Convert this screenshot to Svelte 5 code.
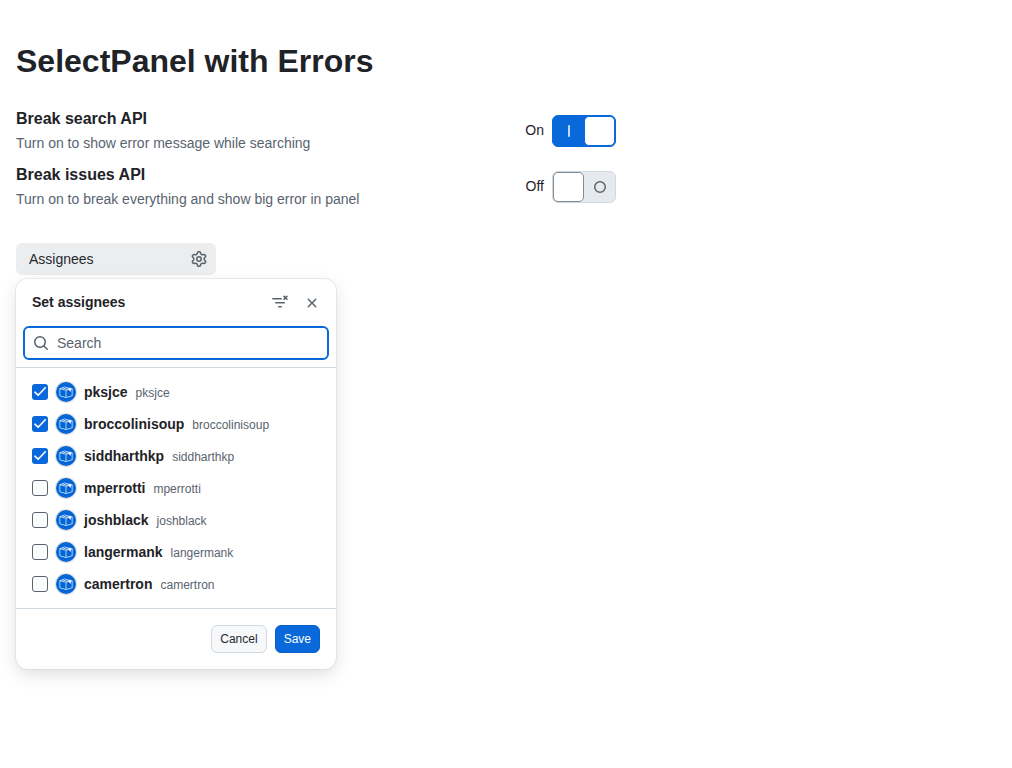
<script>
  let settings = $state([
    { title: 'Break search API', caption: 'Turn on to show error message while searching', on: true },
    { title: 'Break issues API', caption: 'Turn on to break everything and show big error in panel', on: false }
  ]);
  let people = $state([
    { login: 'pksjce', selected: true },
    { login: 'broccolinisoup', selected: true },
    { login: 'siddharthkp', selected: true },
    { login: 'mperrotti', selected: false },
    { login: 'joshblack', selected: false },
    { login: 'langermank', selected: false },
    { login: 'camertron', selected: false }
  ]);
</script>

<main>
  <h1>SelectPanel with Errors</h1>

  <section class="settings">
    {#each settings as s}
      <div class="setting">
        <div class="about">
          <h2>{s.title}</h2>
          <p>{s.caption}</p>
        </div>
        <span class="state">{s.on ? 'On' : 'Off'}</span>
        <button class="switch" class:on={s.on} aria-label={s.title} onclick={() => (s.on = !s.on)}>
          {#if s.on}
            <span class="glyph"><svg width="16" height="16" viewBox="0 0 16 16"><path fill="currentColor" d="M8 2a.75.75 0 0 1 .75.75v10.5a.75.75 0 0 1-1.5 0V2.75A.75.75 0 0 1 8 2Z" /></svg></span>
            <span class="knob"></span>
          {:else}
            <span class="knob"></span>
            <span class="glyph"><svg width="16" height="16" viewBox="0 0 16 16"><circle cx="8" cy="8" r="5.25" fill="none" stroke="currentColor" stroke-width="1.5" /></svg></span>
          {/if}
        </button>
      </div>
    {/each}
  </section>

  <button class="anchor">
    <span>Assignees</span>
    <svg width="16" height="16" viewBox="0 0 16 16" fill="currentColor"><path d="M8 0a8.2 8.2 0 0 1 .701.031C9.444.095 9.99.645 10.16 1.29l.288 1.107c.018.066.079.158.212.224.231.114.454.243.668.386.123.082.233.09.299.071l1.103-.303c.644-.176 1.392.021 1.82.63.27.385.506.792.704 1.218.315.675.111 1.422-.364 1.891l-.814.806c-.049.048-.098.147-.088.294.016.257.016.515 0 .772-.01.147.038.246.088.294l.814.806c.475.469.679 1.216.364 1.891a7.977 7.977 0 0 1-.704 1.217c-.428.61-1.176.807-1.82.63l-1.102-.302c-.067-.019-.177-.011-.3.071a5.909 5.909 0 0 1-.668.386c-.133.066-.194.158-.211.224l-.29 1.106c-.168.646-.715 1.196-1.458 1.26a8.006 8.006 0 0 1-1.402 0c-.743-.064-1.289-.614-1.458-1.26l-.289-1.106c-.018-.066-.079-.158-.212-.224a5.738 5.738 0 0 1-.668-.386c-.123-.082-.233-.09-.299-.071l-1.103.303c-.644.176-1.392-.021-1.82-.63a8.12 8.12 0 0 1-.704-1.218c-.315-.675-.111-1.422.363-1.891l.815-.806c.05-.048.098-.147.088-.294a6.214 6.214 0 0 1 0-.772c.01-.147-.038-.246-.088-.294l-.815-.806C.635 6.045.431 5.298.746 4.623a7.92 7.92 0 0 1 .704-1.217c.428-.61 1.176-.807 1.82-.63l1.102.302c.067.019.177.011.3-.071.214-.143.437-.272.668-.386.133-.066.194-.158.211-.224l.29-1.106C6.009.645 6.556.095 7.299.03 7.53.01 7.764 0 8 0Zm-.571 1.525c-.036.003-.108.036-.137.146l-.289 1.105c-.147.561-.549.967-.998 1.189-.173.086-.34.183-.5.29-.417.278-.97.423-1.529.27l-1.103-.303c-.109-.03-.175.016-.195.045-.22.312-.412.644-.573.99-.014.031-.021.11.059.19l.815.806c.411.406.562.957.53 1.456a4.709 4.709 0 0 0 0 .582c.032.499-.119 1.05-.53 1.456l-.815.806c-.081.08-.073.159-.059.19.162.346.353.677.573.989.02.03.085.076.195.046l1.102-.303c.56-.153 1.113-.008 1.53.27.161.107.328.204.501.29.447.222.85.629.997 1.189l.289 1.105c.029.109.101.143.137.146a6.6 6.6 0 0 0 1.142 0c.036-.003.108-.036.137-.146l.289-1.105c.147-.561.549-.967.998-1.189.173-.086.34-.183.5-.29.417-.278.97-.423 1.529-.27l1.103.303c.109.029.175-.016.195-.045.22-.313.411-.644.573-.99.014-.031.021-.11-.059-.19l-.815-.806c-.411-.406-.562-.957-.53-1.456a4.709 4.709 0 0 0 0-.582c-.032-.499.119-1.05.53-1.456l.815-.806c.081-.08.073-.159.059-.19a6.464 6.464 0 0 0-.573-.989c-.02-.03-.085-.076-.195-.046l-1.102.303c-.56.153-1.113.008-1.53-.27a4.44 4.44 0 0 0-.501-.29c-.447-.222-.85-.629-.997-1.189l-.289-1.105c-.029-.11-.101-.143-.137-.146a6.6 6.6 0 0 0-1.142 0ZM11 8a3 3 0 1 1-6 0 3 3 0 0 1 6 0ZM9.5 8a1.5 1.5 0 1 0-3.001.001A1.5 1.5 0 0 0 9.5 8Z" /></svg>
  </button>

  <div class="panel" role="dialog" aria-label="Set assignees">
    <header>
      <h3>Set assignees</h3>
      <button class="icon" aria-label="Clear selection">
        <svg width="16" height="16" viewBox="0 0 16 16" fill="none" stroke="currentColor" stroke-width="1.6" stroke-linecap="round"><path d="M.8 3.75h8.4M3.8 7.75h8.4M6.8 11.75h2.4M12 1.4l2.9 2.9M14.9 1.4l-2.9 2.9" /></svg>
      </button>
      <button class="icon" aria-label="Close">
        <svg width="16" height="16" viewBox="0 0 16 16" fill="currentColor"><path d="M3.72 3.72a.75.75 0 0 1 1.06 0L8 6.94l3.22-3.22a.749.749 0 0 1 1.275.326.749.749 0 0 1-.215.734L9.06 8l3.22 3.22a.749.749 0 0 1-.326 1.275.749.749 0 0 1-.734-.215L8 9.06l-3.22 3.22a.751.751 0 0 1-1.042-.018.751.751 0 0 1-.018-1.042L6.94 8 3.72 4.78a.75.75 0 0 1 0-1.06Z" /></svg>
      </button>
    </header>

    <div class="search">
      <svg width="16" height="16" viewBox="0 0 16 16" fill="currentColor"><path d="M10.68 11.74a6 6 0 0 1-7.922-8.982 6 6 0 0 1 8.982 7.922l3.04 3.04a.749.749 0 0 1-.326 1.275.749.749 0 0 1-.734-.215ZM11.5 7a4.499 4.499 0 1 0-8.997 0A4.499 4.499 0 0 0 11.5 7Z" /></svg>
      <input type="text" placeholder="Search" />
    </div>

    <ul>
      {#each people as p}
        <li>
          <button class="row" onclick={() => (p.selected = !p.selected)}>
            <span class="box" class:checked={p.selected}>
              {#if p.selected}
                <svg width="16" height="16" viewBox="0 0 16 16"><path d="M2.9 8.2 6.1 11.2 13.3 3.8" fill="none" stroke="#fff" stroke-width="1.6" stroke-linecap="round" stroke-linejoin="round" /></svg>
              {/if}
            </span>
            <svg class="avatar" width="20" height="20" viewBox="0 0 20 20" fill="none" stroke="#fff" stroke-linejoin="round">
              <rect width="20" height="20" fill="#0366d6" stroke="none" />
              <g stroke-opacity=".8" stroke-width=".85">
                <path d="M3.8 6.8 10 8.2 16.2 6.8V13.8L10 15.5 3.8 13.8Z" />
                <path d="M10 8.2v7.3M3.8 6.8 8.6 5 16.2 6.8M6.2 5.9 12.6 7.6" />
              </g>
              <path d="M11.4 6 14.8 6.6v3.4l-1.5-1.5-.4-1.2Z" fill="#fff" stroke="none" />
            </svg>
            <span class="name">{p.login}</span>
            <span class="login">{p.login}</span>
          </button>
        </li>
      {/each}
    </ul>

    <footer>
      <button class="action">Cancel</button>
      <button class="action primary">Save</button>
    </footer>
  </div>
</main>

<style>
  :global(body) {
    margin: 0;
    background: #fff;
  }
  main {
    box-sizing: border-box;
    min-height: 100vh;
    padding: 37px 16px 0;
    font: 14px/20px "Liberation Sans", Arial, sans-serif;
    color: #1f2328;
  }
  h1, h2, h3, p, ul { margin: 0; }
  button {
    font: inherit;
    color: inherit;
    border: 0;
    padding: 0;
    background: none;
    cursor: pointer;
  }
  svg { display: block; flex: none; }
  h1 { font-size: 32px; line-height: 48px; }
  .settings {
    display: grid;
    gap: 8px;
    width: 600px;
    margin-top: 22px;
  }
  .setting {
    display: flex;
    align-items: center;
    height: 48px;
  }
  .about { flex: 1; height: 48px; }
  h2 { font-size: 16px; line-height: 24px; }
  p {
    line-height: 21px;
    margin-top: 2px;
    color: #59636e;
  }
  .state { margin: 0 8px 2px 0; }
  .switch {
    box-sizing: border-box;
    display: flex;
    width: 64px;
    height: 32px;
    border: 1px solid #d1d9e0;
    border-radius: 6px;
    background: #e6eaef;
    color: #59636e;
  }
  .switch.on {
    background: #0969da;
    border-color: #0969da;
    color: #fff;
  }
  .glyph {
    flex: 1;
    height: 30px;
    display: flex;
    align-items: center;
    justify-content: center;
  }
  .knob {
    box-sizing: border-box;
    width: 31px;
    height: 30px;
    border: 1px solid #818b98;
    border-radius: 5px;
    background: #fff;
  }
  .on .knob { border-color: #0969da; }
  .anchor {
    display: flex;
    align-items: center;
    justify-content: space-between;
    box-sizing: border-box;
    width: 200px;
    height: 32px;
    margin-top: 32px;
    padding: 0 9px 0 13px;
    border-radius: 6px;
    background: #ecedef;
    color: #25292e;
  }
  .anchor svg { color: #59636e; }
  .panel {
    width: 320px;
    height: 390px;
    margin-top: 4px;
    display: flex;
    flex-direction: column;
    border-radius: 12px;
    background: #fff;
    box-shadow: 0 0 0 1px #d1d9e080, 0 6px 12px -3px #25292e0a, 0 6px 18px 0 #25292e1f;
  }
  header {
    display: flex;
    align-items: center;
    padding: 8px 8px 8px 16px;
  }
  h3 {
    flex: 1;
    font-size: 14px;
    line-height: 20px;
    padding-bottom: 2px;
  }
  .icon {
    width: 32px;
    height: 32px;
    display: grid;
    place-items: center;
    color: #59636e;
  }
  .search {
    box-sizing: border-box;
    display: flex;
    align-items: center;
    gap: 8px;
    height: 34px;
    margin: -1px 7px 7px;
    padding: 0 8px;
    border: 2px solid #0969da;
    border-radius: 6px;
    color: #59636e;
  }
  input {
    flex: 1;
    min-width: 0;
    border: 0;
    outline: 0;
    padding: 0;
    font: inherit;
    background: none;
  }
  input::placeholder { color: #59636e; opacity: 1; }
  ul {
    list-style: none;
    flex: 1;
    padding: 8px 8px 0;
    border-top: 1px solid #d1d9e0;
  }
  .row {
    display: flex;
    align-items: center;
    width: 100%;
    height: 32px;
    padding: 0 8px;
  }
  .box {
    box-sizing: border-box;
    width: 16px;
    height: 16px;
    border: 1px solid #59636e;
    border-radius: 3px;
  }
  .box.checked {
    border: 0;
    background: #0969da;
  }
  .avatar {
    margin: 0 8px;
    border-radius: 50%;
    box-shadow: 0 0 0 1px #1f232826;
  }
  .name { font-weight: 700; }
  .login {
    margin-left: 8px;
    padding-top: 2px;
    font-size: 12px;
    color: #59636e;
  }
  footer {
    display: flex;
    justify-content: flex-end;
    gap: 8px;
    padding: 16px;
    border-top: 1px solid #d1d9e0;
  }
  .action {
    box-sizing: border-box;
    height: 28px;
    padding: 0 8px;
    border: 1px solid #d1d9e0;
    border-radius: 6px;
    background: #f6f8fa;
    color: #25292e;
    font-size: 12px;
  }
  .action.primary {
    border-color: #0860ca;
    background: #0969da;
    color: #fff;
  }
</style>
